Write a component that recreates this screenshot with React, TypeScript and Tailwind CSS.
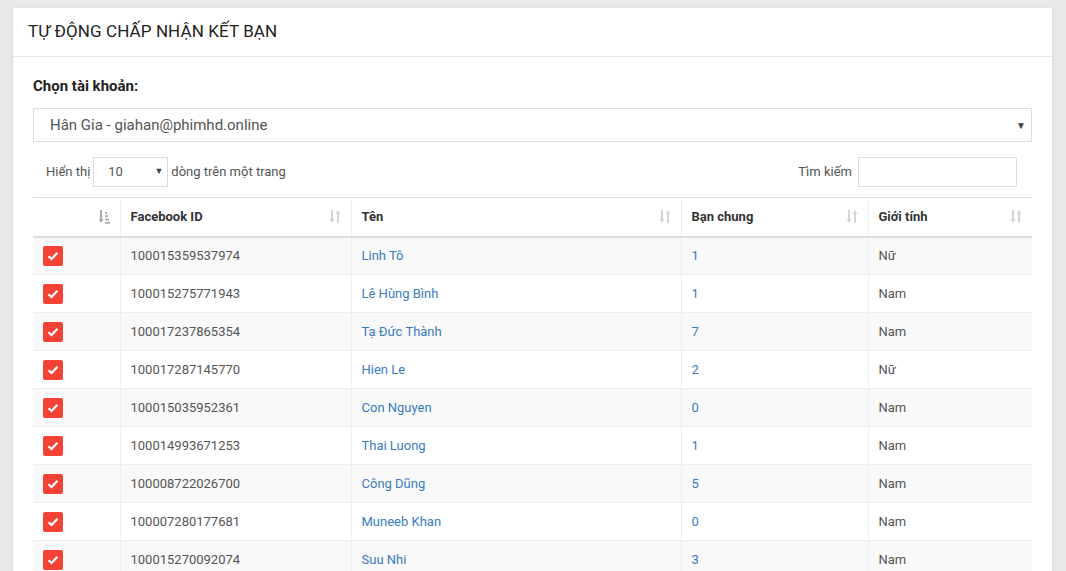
import React from 'react';

const rows = [
  ['100015359537974', 'Linh Tô', '1', 'Nữ'],
  ['100015275771943', 'Lê Hùng Bình', '1', 'Nam'],
  ['100017237865354', 'Tạ Đức Thành', '7', 'Nam'],
  ['100017287145770', 'Hien Le', '2', 'Nữ'],
  ['100015035952361', 'Con Nguyen', '0', 'Nam'],
  ['100014993671253', 'Thai Luong', '1', 'Nam'],
  ['100008722026700', 'Công Dũng', '5', 'Nam'],
  ['100007280177681', 'Muneeb Khan', '0', 'Nam'],
  ['100015270092074', 'Suu Nhi', '3', 'Nam'],
  ['100015012345678', 'Minh Anh', '2', 'Nữ'],
];

function SortBoth() {
  return (
    <svg width="12" height="15" viewBox="0 0 12 15" className="text-[#d6d6d6]">
      <path d="M3 1v11" stroke="currentColor" strokeWidth="2" />
      <path d="M0.5 10L3 14L5.5 10z" fill="currentColor" />
      <path d="M9 3v11" stroke="currentColor" strokeWidth="2" />
      <path d="M6.5 5L9 1L11.5 5z" fill="currentColor" />
    </svg>
  );
}

function SortAsc() {
  return (
    <svg width="12" height="15" viewBox="0 0 12 15" className="text-[#aaa]">
      <path d="M3 1v11" stroke="currentColor" strokeWidth="2" />
      <path d="M0.5 10L3 14L5.5 10z" fill="currentColor" />
      <rect x="7" y="3" width="2" height="1.8" fill="currentColor" />
      <rect x="7" y="6.3" width="3" height="1.8" fill="currentColor" />
      <rect x="7" y="9.6" width="4" height="1.8" fill="currentColor" />
      <rect x="7" y="12.9" width="5" height="1.8" fill="currentColor" />
    </svg>
  );
}

function Check() {
  return (
    <div className="w-5 h-5 rounded-[2px] bg-[#f44336] flex items-center justify-center">
      <svg width="12" height="10" viewBox="0 0 12 10">
        <path d="M1.5 5.2L4.5 8L10.5 1.8" stroke="white" strokeWidth="2.2" fill="none" />
      </svg>
    </div>
  );
}

export default function App() {
  return (
    <div className="min-h-screen bg-[#e9e9e9] pt-2 pl-[13px] pr-[14px] font-['Roboto',sans-serif]">
      <div className="bg-white shadow-[0_1px_3px_rgba(0,0,0,0.12)]">
        <div className="h-[49px] border-b border-[#eaeaea] flex items-center px-[15px]">
          <h2 className="text-[17px] text-[#222] tracking-[0.1px]">TỰ ĐỘNG CHẤP NHẬN KẾT BẠN</h2>
        </div>
        <div className="px-5 pt-[20px]">
          <div className="text-[15px] font-bold text-[#222] mb-[13px] leading-[18px]">Chọn tài khoản:</div>
          <div className="h-[34px] border border-[#ddd] flex items-center justify-between pl-4 pr-[5px] text-[15px] text-[#555]">
            <span>Hân Gia - giahan@phimhd.online</span>
            <span className="text-[10px] text-[#444]">▼</span>
          </div>
          <div className="flex items-center justify-between mt-[15px] h-[30px]">
            <div className="flex items-center text-[13px] text-[#555] pl-[13px]">
              <span>Hiển thị</span>
              <div className="ml-[3px] w-[75px] h-[30px] border border-[#ddd] flex items-center justify-between pl-[14px] pr-[4px]">
                <span>10</span>
                <span className="text-[9px] text-[#444]">▼</span>
              </div>
              <span className="ml-[3px]">dòng trên một trang</span>
            </div>
            <div className="flex items-center text-[13px] text-[#555] pr-[15px]">
              <span>Tìm kiếm</span>
              <div className="ml-[6px] w-[159px] h-[30px] border border-[#ddd]" />
            </div>
          </div>
          <table className="w-full mt-[10px] border-collapse table-fixed text-[13px]">
            <colgroup>
              <col className="w-[87px]" />
              <col className="w-[231px]" />
              <col className="w-[330px]" />
              <col className="w-[187px]" />
              <col />
            </colgroup>
            <thead>
              <tr className="border-t border-[#ddd] border-b-2 border-b-[#ddd] h-[39px]">
                <th className="px-[10px] text-left">
                  <div className="flex justify-end"><SortAsc /></div>
                </th>
                {['Facebook ID', 'Tên', 'Bạn chung', 'Giới tính'].map((h) => (
                  <th key={h} className="border-l border-[#eee] px-[10px] text-left font-bold text-[#333]">
                    <div className="flex items-center justify-between">
                      <span>{h}</span>
                      <SortBoth />
                    </div>
                  </th>
                ))}
              </tr>
            </thead>
            <tbody>
              {rows.map((r, i) => (
                <tr key={i} className={`h-[38px] border-b border-[#eee] ${i % 2 === 0 ? 'bg-[#f9f9f9]' : 'bg-white'}`}>
                  <td className="px-[10px]"><Check /></td>
                  <td className="border-l border-[#eee] px-[10px] text-[#555]">{r[0]}</td>
                  <td className="border-l border-[#eee] px-[10px] text-[#3a7bbf]">{r[1]}</td>
                  <td className="border-l border-[#eee] px-[10px] text-[#3a7bbf]">{r[2]}</td>
                  <td className="border-l border-[#eee] px-[10px] text-[#555]">{r[3]}</td>
                </tr>
              ))}
            </tbody>
          </table>
        </div>
      </div>
    </div>
  );
}
